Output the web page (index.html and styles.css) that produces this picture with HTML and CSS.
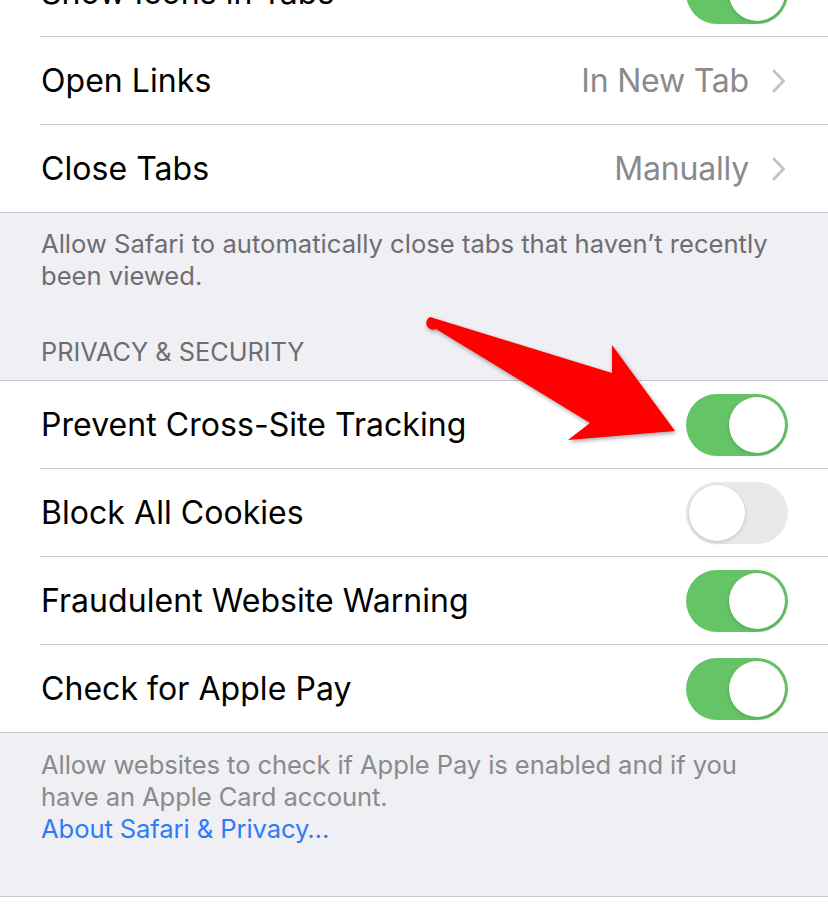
FILE: index.html
```html
<!DOCTYPE html>
<html lang="en">
<head>
  <meta charset="UTF-8">
  <meta name="viewport" content="width=device-width, initial-scale=1.0">
  <title>Safari Settings</title>
  <link rel="stylesheet" href="styles.css">
</head>
<body>
  <!-- Tabs group -->
  <div class="group group-tabs">
    <div class="row">
      <span class="label">Show Icons in Tabs</span>
      <span class="switch on"><span class="knob"></span></span>
    </div>
    <div class="row">
      <span class="label">Open Links</span>
      <span class="value">In New Tab</span>
      <svg class="chevron" width="14" height="24" viewBox="0 0 14 24"><polyline points="2,2 11.5,12 2,22" /></svg>
    </div>
    <div class="row">
      <span class="label">Close Tabs</span>
      <span class="value">Manually</span>
      <svg class="chevron" width="14" height="24" viewBox="0 0 14 24"><polyline points="2,2 11.5,12 2,22" /></svg>
    </div>
  </div>
  <div class="footer footer-tabs">
    Allow Safari to automatically close tabs that haven’t recently been viewed.
  </div>

  <!-- Privacy group -->
  <div class="section-title">PRIVACY &amp; SECURITY</div>
  <div class="group group-privacy">
    <div class="row">
      <span class="label">Prevent Cross-Site Tracking</span>
      <span class="switch on"><span class="knob"></span></span>
    </div>
    <div class="row">
      <span class="label">Block All Cookies</span>
      <span class="switch"><span class="knob"></span></span>
    </div>
    <div class="row">
      <span class="label">Fraudulent Website Warning</span>
      <span class="switch on"><span class="knob"></span></span>
    </div>
    <div class="row">
      <span class="label">Check for Apple Pay</span>
      <span class="switch on"><span class="knob"></span></span>
    </div>
  </div>
  <div class="footer footer-privacy">
    Allow websites to check if Apple Pay is enabled and if you have an Apple Card account.<br>
    <a href="#" class="link">About Safari &amp; Privacy…</a>
  </div>
  <div class="group group-next"></div>

  <!-- callout arrow pointing at the tracking switch -->
  <svg class="callout" width="270" height="145" viewBox="0 0 270 145">
    <path d="M10,12 L192,68 L192,40 L255,126 L148,135 L170,118 L16,24 A6.5,6.5 0 0 1 10,12 Z" />
  </svg>
</body>
</html>
```

FILE: styles.css
```css
body {
  margin: 0;
  background-color: #efeff4;
  font-family: Inter, "Noto Sans", sans-serif;
  color: #000;
  position: relative;
  overflow: hidden;
  height: 913px;
}

.group {
  background-color: #fff;
  border-bottom: 1px solid #c6c6c8;
}

.group-tabs {
  margin-top: -51px;
}

.group-privacy {
  border-top: 1px solid #c6c6c8;
}

.group-next {
  border-top: 1px solid #c6c6c8;
  border-bottom: none;
  height: 40px;
}

.row {
  display: flex;
  align-items: center;
  height: 88px;
  box-sizing: border-box;
  margin-left: 40px;
  padding-right: 42px;
  border-bottom: 1px solid #c6c6c8;
}

.row:last-child {
  margin-left: 0;
  padding-left: 40px;
  border-bottom: none;
  height: 87px;
}

.label {
  flex: 1;
  font-size: 32px;
  letter-spacing: 0.05px;
  padding-left: 1px;
  padding-bottom: 1px;
}

.value {
  font-size: 32px;
  color: #8a8a8e;
  letter-spacing: -0.2px;
  margin-right: 23px;
  padding-bottom: 1px;
}

.chevron polyline {
  fill: none;
  stroke: #c4c4c7;
  stroke-width: 3;
  stroke-linecap: round;
  stroke-linejoin: round;
}

/* iOS style switch */
.switch {
  width: 102px;
  height: 62px;
  margin-right: -2px;
  border-radius: 31px;
  background-color: #e9e9eb;
  box-sizing: border-box;
  padding: 3px;
  display: flex;
  align-items: center;
}

.switch.on {
  background-color: #65c466;
  justify-content: flex-end;
}

.knob {
  width: 56px;
  height: 56px;
  border-radius: 50%;
  background-color: #fff;
  box-shadow: 0 2px 4px rgba(0, 0, 0, 0.12), 0 0 0 1px rgba(0, 0, 0, 0.03);
}

.footer {
  font-size: 25.6px;
  line-height: 32px;
  color: #6d6d72;
  padding: 15px 40px 0 41px;
}

.footer-tabs {
  padding-bottom: 44px;
}

.footer-privacy {
  color: #8a8a8e;
  padding-top: 16px;
  padding-bottom: 51px;
  letter-spacing: -0.1px;
}

.link {
  color: #2f7bf5;
  text-decoration: none;
}

.section-title {
  font-size: 25.3px;
  line-height: 32px;
  color: #6d6d72;
  padding: 0 40px 12px 41px;
}

.callout {
  position: absolute;
  left: 420px;
  top: 305px;
  overflow: visible;
  filter: drop-shadow(1px 2px 2px rgba(0, 0, 0, 0.35));
}

.callout path {
  fill: #ff0000;
}
```
